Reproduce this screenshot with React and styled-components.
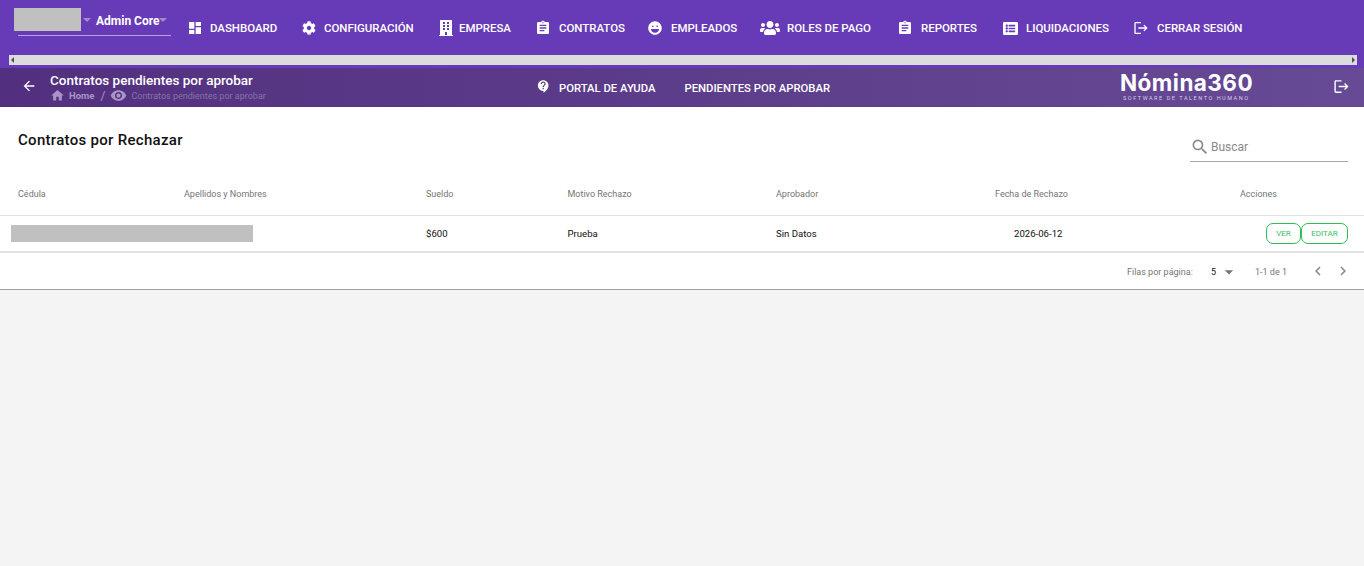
import React from 'react';
import styled, { createGlobalStyle } from 'styled-components';
import {
  MdDashboard, MdAssignment, MdArrowBack, MdHome, MdVisibility, MdSearch,
  MdArrowDropDown, MdChevronLeft, MdChevronRight, MdContactSupport, MdLogout,
} from 'react-icons/md';
import { FaCog, FaBuilding, FaUsers, FaListAlt, FaLaugh } from 'react-icons/fa';

const GlobalStyle = createGlobalStyle`
  html, body {
    margin: 0;
    padding: 0;
    background: #f4f4f4;
    font-family: Roboto, "Liberation Sans", sans-serif;
    overflow: hidden;
  }
`;

const navItems = [
  { label: 'Dashboard', icon: <MdDashboard size={16} />, width: 114, box: 22, shift: -1 },
  { label: 'Configuración', icon: <FaCog size={14} />, width: 136, box: 22, shift: 0 },
  { label: 'Empresa', icon: <FaBuilding size={16} />, width: 98, box: 21, shift: 0 },
  { label: 'Contratos', icon: <MdAssignment size={16} />, width: 112, box: 23, shift: -1 },
  { label: 'Empleados', icon: <FaLaugh size={14} />, width: 112, box: 23, shift: 0 },
  { label: 'Roles de pago', icon: <FaUsers size={20} />, width: 138, box: 27, shift: 0 },
  { label: 'Reportes', icon: <MdAssignment size={16} />, width: 105, box: 23, shift: -1 },
  { label: 'Liquidaciones', icon: <FaListAlt size={15} />, width: 131, box: 23, shift: 0 },
  { label: 'Cerrar sesión', icon: <MdLogout size={16} />, width: 120, box: 23, shift: -1 },
];

const columns = ['Cédula', 'Apellidos y Nombres', 'Sueldo', 'Motivo Rechazo', 'Aprobador', 'Fecha de Rechazo', 'Acciones'];

const App = () => {
  return (
    <>
      <GlobalStyle />
      <TopBar>
        <NavRow>
          <UserBox>
            <UserPhoto />
            <Caret />
            <UserName>Admin Core</UserName>
            <Caret $tight />
          </UserBox>
          <NavList>
            {navItems.map((item) => (
              <NavItem key={item.label} $width={item.width}>
                <NavIcon $box={item.box} $shift={item.shift}>{item.icon}</NavIcon>
                <NavLabel>{item.label}</NavLabel>
              </NavItem>
            ))}
          </NavList>
        </NavRow>
        <ScrollTrack>
          <ScrollArrow $left />
          <ScrollArrow />
        </ScrollTrack>
      </TopBar>

      <SubHeader>
        <BackButton><MdArrowBack size={16} /></BackButton>
        <TitleBlock>
          <PageTitle>Contratos pendientes por aprobar</PageTitle>
          <Crumbs>
            <MdHome size={15} />
            <CrumbHome>Home</CrumbHome>
            <CrumbSlash>/</CrumbSlash>
            <MdVisibility size={17} />
            <CrumbPage>Contratos pendientes por aprobar</CrumbPage>
          </Crumbs>
        </TitleBlock>
        <SubLinks>
          <SubLink>
            <HelpIcon><MdContactSupport size={15} /></HelpIcon>
            <SubLabel>Portal de ayuda</SubLabel>
          </SubLink>
          <SubLink><SubLabel>Pendientes por aprobar</SubLabel></SubLink>
        </SubLinks>
        <Logo>
          <LogoName>Nómina360</LogoName>
          <LogoTag>SOFTWARE DE TALENTO HUMANO</LogoTag>
        </Logo>
        <ExitButton><MdLogout size={17} /></ExitButton>
      </SubHeader>

      <Card>
        <CardHead>
          <CardTitle>Contratos por Rechazar</CardTitle>
          <SearchBox>
            <MdSearch size={20} color="#8a8a8a" />
            <SearchText>Buscar</SearchText>
          </SearchBox>
        </CardHead>
        <HeadRow>
          {columns.map((c) => <HeadCell key={c}>{c}</HeadCell>)}
        </HeadRow>
        <BodyRow>
          <Redacted />
          <Cell />
          <Cell />
          <Cell>$600</Cell>
          <Cell>Prueba</Cell>
          <Cell>Sin Datos</Cell>
          <DateCell>2026-06-12</DateCell>
          <ActionCell>
            <ActionButton $w={35}>VER</ActionButton>
            <ActionButton $w={47}>EDITAR</ActionButton>
          </ActionCell>
        </BodyRow>
        <Pager>
          <PagerLabel>Filas por página:</PagerLabel>
          <PageSize>5</PageSize>
          <PagerCaret><MdArrowDropDown size={20} /></PagerCaret>
          <PagerCount>1-1 de 1</PagerCount>
          <PagerBtn><MdChevronLeft size={18} /></PagerBtn>
          <PagerBtn><MdChevronRight size={18} /></PagerBtn>
        </Pager>
      </Card>
    </>
  );
};

export default App;

const TopBar = styled.div`
  background: #673ab7;
  height: 68px;
  padding-top: 8px;
  box-sizing: border-box;
`;

const NavRow = styled.div`
  display: flex;
  height: 47px;
  padding-left: 14px;
`;

const UserBox = styled.div`
  display: flex;
  align-items: flex-start;
  width: 153px;
  height: 27px;
  margin-left: 4px;
  margin-right: 17px;
  border-bottom: 1px solid #b9a3e0;
`;

const UserPhoto = styled.div`
  flex: none;
  width: 67px;
  height: 23px;
  margin-left: -4px;
  background: #c0c0c0;
`;

const Caret = styled.span`
  flex: none;
  width: 0;
  height: 0;
  margin: 10px ${(p) => (p.$tight ? '0' : '5px')} 0 ${(p) => (p.$tight ? '-1px' : '2px')};
  border-left: 4px solid transparent;
  border-right: 4px solid transparent;
  border-top: 4px solid #a38bc9;
`;

const UserName = styled.span`
  color: #fff;
  font-size: 12px;
  font-weight: 700;
  line-height: 26px;
  white-space: nowrap;
`;

const NavList = styled.div`
  display: flex;
  height: 40px;
`;

const NavItem = styled.div`
  display: flex;
  align-items: center;
  width: ${(p) => p.$width}px;
  color: #fff;
  flex: none;
`;

const NavIcon = styled.span`
  display: flex;
  align-items: center;
  flex: none;
  width: ${(p) => p.$box}px;
  margin-left: ${(p) => p.$shift}px;
  padding-right: ${(p) => -p.$shift}px;
  box-sizing: content-box;
`;

const NavLabel = styled.span`
  font-size: 11.5px;
  font-weight: 500;
  letter-spacing: -0.04px;
  text-transform: uppercase;
  white-space: nowrap;
`;

const ScrollTrack = styled.div`
  display: flex;
  align-items: center;
  justify-content: space-between;
  height: 10px;
  margin: 0 7px 0 9px;
  padding: 0 2px;
  background: #dcdcdc;
`;

const ScrollArrow = styled.span`
  width: 0;
  height: 0;
  border-top: 3px solid transparent;
  border-bottom: 3px solid transparent;
  ${(p) => (p.$left ? 'border-right: 3px solid #505050;' : 'border-left: 3px solid #505050;')}
`;

const SubHeader = styled.div`
  display: flex;
  align-items: center;
  height: 39px;
  padding-left: 21px;
  color: #fff;
  background: linear-gradient(90deg, #52307f 0%, #674a96 100%);
`;

const BackButton = styled.div`
  display: flex;
  width: 29px;
  flex: none;
  margin-top: -3px;
`;

const TitleBlock = styled.div`
  width: 486px;
  flex: none;
`;

const PageTitle = styled.div`
  font-size: 13.5px;
  font-weight: 500;
  line-height: 18px;
  margin-top: -2px;
  white-space: nowrap;
`;

const Crumbs = styled.div`
  display: flex;
  align-items: center;
  height: 14px;
  color: #a895c6;
`;

const CrumbHome = styled.span`
  font-size: 9.5px;
  font-weight: 700;
  margin-left: 4px;
`;

const CrumbSlash = styled.span`
  font-size: 12px;
  margin: 0 5px 0 6px;
`;

const CrumbPage = styled.span`
  font-size: 9px;
  margin-left: 4px;
  color: #8672a9;
  white-space: nowrap;
`;

const SubLinks = styled.div`
  display: flex;
  width: 584px;
  flex: none;
`;

const SubLink = styled.div`
  display: flex;
  align-items: center;
  gap: 8px;
  margin-right: 29px;
`;

const HelpIcon = styled.span`
  display: flex;
  margin-top: -3px;
`;

const SubLabel = styled.span`
  padding-top: 2px;
  font-size: 11.3px;
  font-weight: 500;
  text-transform: uppercase;
  white-space: nowrap;
`;

const Logo = styled.div`
  width: 213px;
  flex: none;
  margin-top: -4px;
`;

const LogoName = styled.div`
  font-family: Inter, "Open Sans", sans-serif;
  font-size: 22.5px;
  font-weight: 700;
  line-height: 23px;
  letter-spacing: 0.45px;
`;

const LogoTag = styled.div`
  font-size: 5.5px;
  letter-spacing: 1.55px;
  line-height: 6px;
  margin: 1px 0 0 3px;
  color: #d5cce6;
  white-space: nowrap;
`;

const ExitButton = styled.div`
  display: flex;
  margin-top: -2px;
`;

const Card = styled.div`
  background: #fff;
  height: 182px;
  border-bottom: 1px solid #a0a0a0;
  box-shadow: 0 1px 2px rgba(0, 0, 0, 0.35);
`;

const CardHead = styled.div`
  display: flex;
  justify-content: space-between;
  height: 71px;
  padding: 0 16px 0 18px;
`;

const CardTitle = styled.div`
  font-size: 15px;
  font-weight: 500;
  color: #111;
  margin-top: 24px;
  line-height: 18px;
  letter-spacing: 0.3px;
`;

const SearchBox = styled.div`
  display: flex;
  align-items: center;
  gap: 1px;
  width: 158px;
  height: 32px;
  margin-top: 23px;
  padding-top: 3px;
  box-sizing: border-box;
  border-bottom: 1px solid #a8a8a8;
`;

const SearchText = styled.span`
  font-size: 12px;
  color: #8a8a8a;
`;

const gridCols = '166px 242px 141.5px 208.5px 219px 1fr 124px';

const HeadRow = styled.div`
  display: grid;
  grid-template-columns: ${gridCols};
  align-items: center;
  height: 31px;
  padding: 0 0 6px 18px;
  border-bottom: 1px solid #e0e0e0;
`;

const HeadCell = styled.div`
  font-size: 9px;
  color: #757575;
  white-space: nowrap;
`;

const BodyRow = styled.div`
  position: relative;
  display: grid;
  grid-template-columns: ${gridCols};
  align-items: center;
  height: 35px;
  padding-left: 18px;
  border-bottom: 2px solid #e0e0e0;
`;

const Cell = styled.div`
  font-size: 9.6px;
  color: #111;
  white-space: nowrap;
`;

const DateCell = styled(Cell)`
  padding-left: 19px;
`;

const Redacted = styled.div`
  position: absolute;
  left: 11px;
  top: 9px;
  width: 242px;
  height: 17px;
  background: #c0c0c0;
`;

const ActionCell = styled.div`
  display: flex;
  justify-content: flex-end;
  padding-right: 16px;
`;

const ActionButton = styled.div`
  display: flex;
  align-items: center;
  justify-content: center;
  box-sizing: border-box;
  flex: none;
  width: ${(p) => p.$w}px;
  height: 21px;
  border: 1px solid #2ebd55;
  border-radius: 7px;
  color: #35c061;
  font-size: 8px;
`;

const Pager = styled.div`
  display: flex;
  align-items: center;
  height: 37px;
  padding-left: 1127px;
  color: #757575;
`;

const PagerLabel = styled.span`
  font-size: 9px;
  width: 84px;
  white-space: nowrap;
`;

const PageSize = styled.span`
  font-size: 9px;
  color: #111;
  width: 8px;
`;

const PagerCaret = styled.span`
  display: flex;
  width: 36px;
`;

const PagerCount = styled.span`
  font-size: 9px;
  width: 54px;
  white-space: nowrap;
`;

const PagerBtn = styled.span`
  display: flex;
  width: 25px;
  margin-top: -2px;
  color: #888;
`;
